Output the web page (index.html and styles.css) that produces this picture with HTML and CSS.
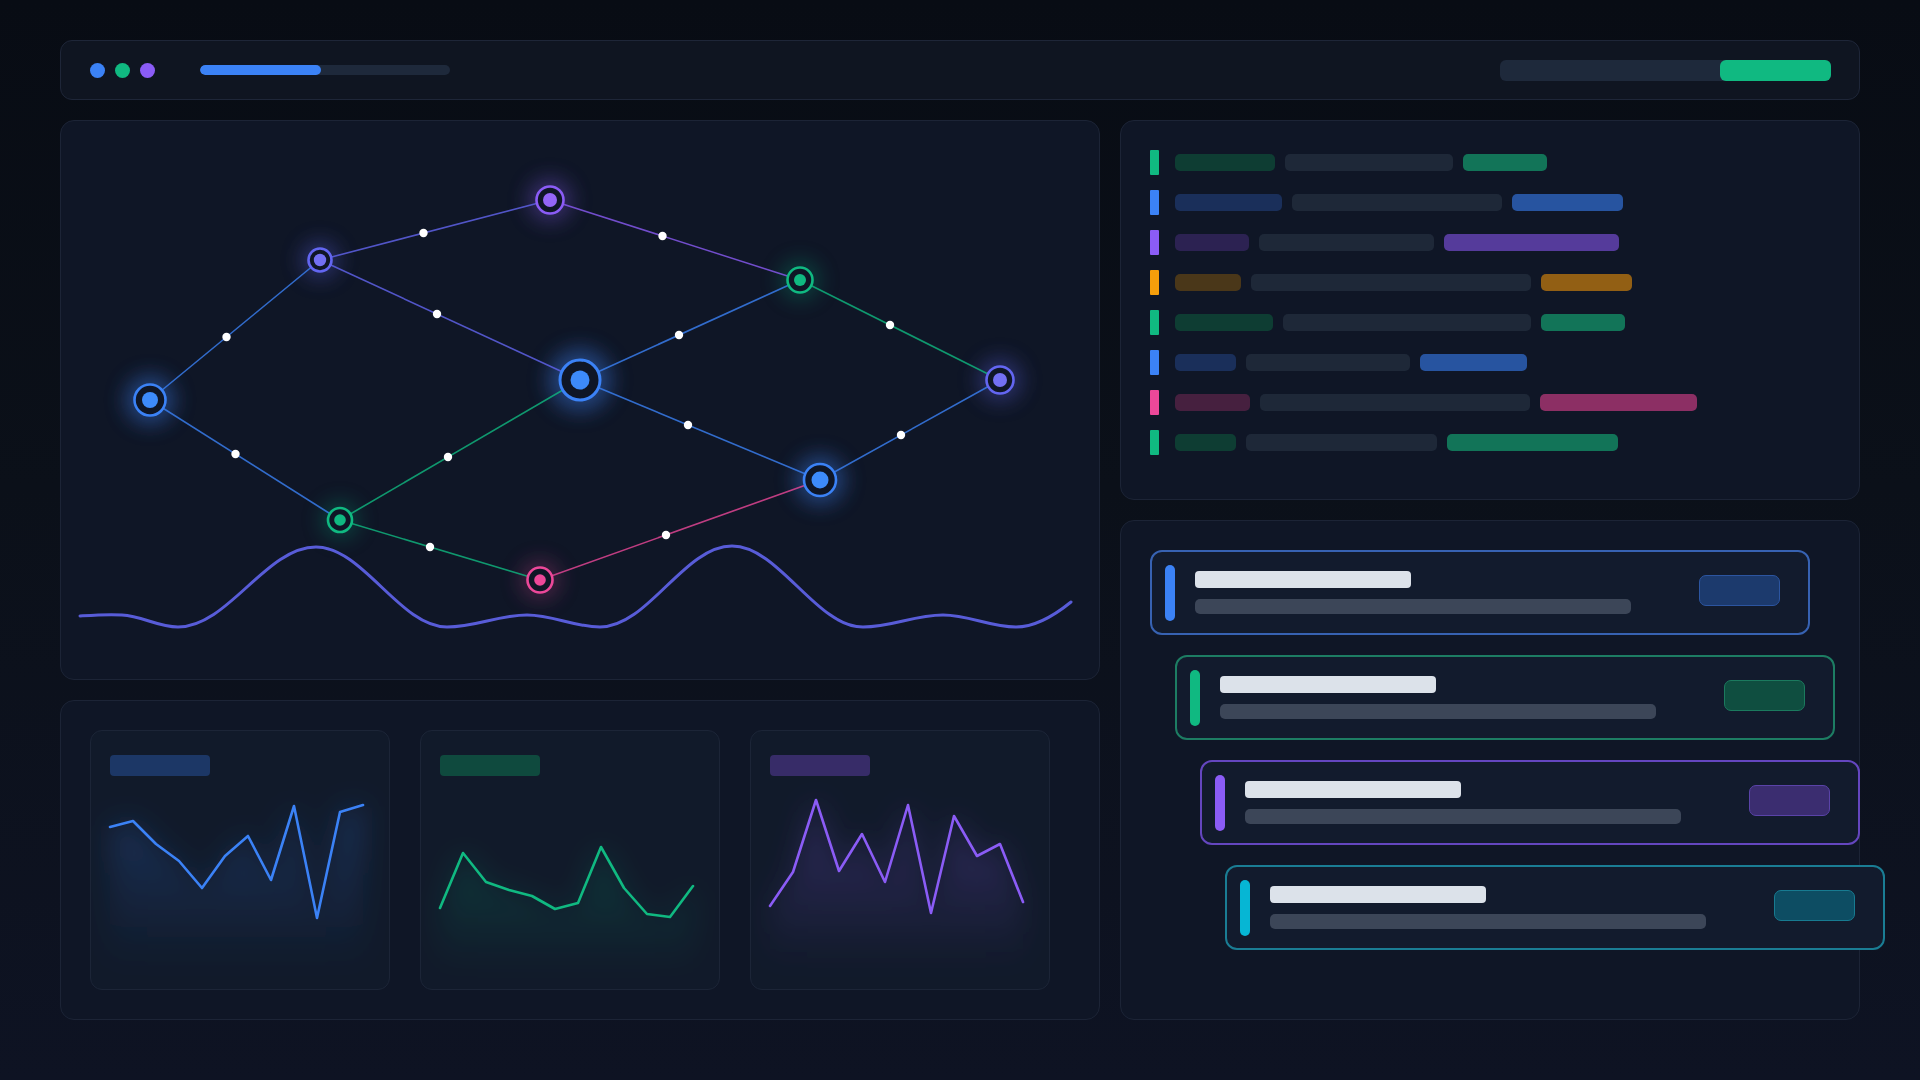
FILE: index.html
```html
<!DOCTYPE html>
<html lang="en">
<head>
<meta charset="utf-8">
<title>Dashboard</title>
<link rel="stylesheet" href="styles.css">
</head>
<body>
<div class="app">
  <header class="topbar">
    <div class="dots">
      <span class="dot dot-blue"></span>
      <span class="dot dot-green"></span>
      <span class="dot dot-purple"></span>
    </div>
    <div class="progress"><div class="progress-fill" style="width:121px"></div></div>
    <div class="status"><div class="status-fill"></div></div>
  </header>

  <main class="layout">
    <div class="col col-left">
      <section class="panel graph">
        <svg class="graph-svg" width="1038" height="558" viewBox="1 1 1038 558">
          <defs>
            <filter id="glow" x="-100%" y="-100%" width="300%" height="300%">
              <feGaussianBlur stdDeviation="10"/>
            </filter>
          </defs>
          <g class="glows" filter="url(#glow)">
            <circle cx="90" cy="280" r="25" fill="#3b82f6" opacity="0.4"/>
            <circle cx="260" cy="140" r="19" fill="#6366f1" opacity="0.32"/>
            <circle cx="490" cy="80" r="22" fill="#8b5cf6" opacity="0.32"/>
            <circle cx="520" cy="260" r="32" fill="#3b82f6" opacity="0.4"/>
            <circle cx="740" cy="160" r="20" fill="#10b981" opacity="0.25"/>
            <circle cx="940" cy="260" r="22" fill="#6366f1" opacity="0.32"/>
            <circle cx="280" cy="400" r="19" fill="#10b981" opacity="0.25"/>
            <circle cx="480" cy="460" r="20" fill="#ec4899" opacity="0.25"/>
            <circle cx="760" cy="360" r="25" fill="#3b82f6" opacity="0.4"/>
          </g>
          <g class="edges" stroke-width="1.6" fill="none" opacity="0.8">
            <line x1="90" y1="280" x2="260" y2="140" stroke="#3b82f6"/>
            <line x1="260" y1="140" x2="490" y2="80" stroke="#6366f1"/>
            <line x1="260" y1="140" x2="520" y2="260" stroke="#6366f1"/>
            <line x1="490" y1="80" x2="740" y2="160" stroke="#8b5cf6"/>
            <line x1="520" y1="260" x2="740" y2="160" stroke="#3b82f6"/>
            <line x1="740" y1="160" x2="940" y2="260" stroke="#10b981"/>
            <line x1="90" y1="280" x2="280" y2="400" stroke="#3b82f6"/>
            <line x1="280" y1="400" x2="520" y2="260" stroke="#10b981"/>
            <line x1="520" y1="260" x2="760" y2="360" stroke="#3b82f6"/>
            <line x1="760" y1="360" x2="940" y2="260" stroke="#3b82f6"/>
            <line x1="280" y1="400" x2="480" y2="460" stroke="#10b981"/>
            <line x1="480" y1="460" x2="760" y2="360" stroke="#ec4899"/>
          </g>
          <path class="wave" d="M20,496 C35,495 48,494 62,495 C82,496 98,507 118,507 C168,507 206,427 256,427 C303,427 340,507 387,507 C416,507 438,495 467,495 C493,495 514,507 540,507 C588,507 624,426 672,426 C719,426 756,507 803,507 C832,507 854,495 883,495 C909,495 930,507 956,507 C975,507 995,495 1011,482"/>
          <g class="nodes" stroke-width="2.6">
            <circle cx="90" cy="280" r="15.5" fill="#0f1626" stroke="#3b82f6"/>
            <circle cx="90" cy="280" r="8" fill="#3d8bfa"/>
            <circle cx="260" cy="140" r="11.5" fill="#0f1626" stroke="#6366f1"/>
            <circle cx="260" cy="140" r="6.2" fill="#7370f3"/>
            <circle cx="490" cy="80" r="13.5" fill="#0f1626" stroke="#8b5cf6"/>
            <circle cx="490" cy="80" r="7" fill="#9466f7"/>
            <circle cx="520" cy="260" r="20" fill="#0f1626" stroke="#3b82f6" stroke-width="3"/>
            <circle cx="520" cy="260" r="9.5" fill="#3d8bfa"/>
            <circle cx="740" cy="160" r="12.5" fill="#0f1626" stroke="#10b981"/>
            <circle cx="740" cy="160" r="6" fill="#10b981"/>
            <circle cx="940" cy="260" r="13.5" fill="#0f1626" stroke="#6366f1"/>
            <circle cx="940" cy="260" r="7" fill="#7370f3"/>
            <circle cx="280" cy="400" r="12" fill="#0f1626" stroke="#10b981"/>
            <circle cx="280" cy="400" r="5.8" fill="#10b981"/>
            <circle cx="480" cy="460" r="12.5" fill="#0f1626" stroke="#ec4899"/>
            <circle cx="480" cy="460" r="5.8" fill="#ec4899"/>
            <circle cx="760" cy="360" r="16" fill="#0f1626" stroke="#3b82f6"/>
            <circle cx="760" cy="360" r="8.5" fill="#3d8bfa"/>
          </g>
          <g class="packets" fill="#ffffff">
            <circle cx="166.5" cy="217" r="4.2"/>
            <circle cx="363.5" cy="113" r="4.2"/>
            <circle cx="377" cy="194" r="4.2"/>
            <circle cx="602.5" cy="116" r="4.2"/>
            <circle cx="619" cy="215" r="4.2"/>
            <circle cx="830" cy="205" r="4.2"/>
            <circle cx="175.5" cy="334" r="4.2"/>
            <circle cx="388" cy="337" r="4.2"/>
            <circle cx="628" cy="305" r="4.2"/>
            <circle cx="841" cy="315" r="4.2"/>
            <circle cx="370" cy="427" r="4.2"/>
            <circle cx="606" cy="415" r="4.2"/>
          </g>
        </svg>
      </section>

      <section class="panel charts">
        <div class="mini">
          <div class="mini-label label-blue"></div>
          <svg class="mini-svg" width="298" height="213" viewBox="1 46 298 213">
            <defs>
              <linearGradient id="fillBlue" x1="0" y1="0" x2="0" y2="1">
                <stop offset="0" stop-color="#3b82f6" stop-opacity="0.22"/>
                <stop offset="1" stop-color="#3b82f6" stop-opacity="0"/>
              </linearGradient>
              <filter id="soft" x="-30%" y="-30%" width="160%" height="160%">
                <feGaussianBlur stdDeviation="14"/>
              </filter>
            </defs>
            <polygon filter="url(#soft)" fill="url(#fillBlue)" points="20,97 43,91 66,114 89,131 112,158 135,126 158,106 181,150 204,76 227,188 250,82 273,75 273,235 20,235"/>
            <polyline class="spark spark-blue" points="20,97 43,91 66,114 89,131 112,158 135,126 158,106 181,150 204,76 227,188 250,82 273,75"/>
          </svg>
        </div>
        <div class="mini">
          <div class="mini-label label-green"></div>
          <svg class="mini-svg" width="298" height="213" viewBox="1 46 298 213">
            <defs>
              <linearGradient id="fillGreen" x1="0" y1="0" x2="0" y2="1">
                <stop offset="0" stop-color="#10b981" stop-opacity="0.2"/>
                <stop offset="1" stop-color="#10b981" stop-opacity="0"/>
              </linearGradient>
            </defs>
            <polygon filter="url(#soft)" fill="url(#fillGreen)" points="20,178 43,123 66,152 89,160 112,166 135,179 158,173 181,117 204,158 227,184 250,187 273,156 273,240 20,240"/>
            <polyline class="spark spark-green" points="20,178 43,123 66,152 89,160 112,166 135,179 158,173 181,117 204,158 227,184 250,187 273,156"/>
          </svg>
        </div>
        <div class="mini">
          <div class="mini-label label-purple"></div>
          <svg class="mini-svg" width="298" height="213" viewBox="1 46 298 213">
            <defs>
              <linearGradient id="fillPurple" x1="0" y1="0" x2="0" y2="1">
                <stop offset="0" stop-color="#8b5cf6" stop-opacity="0.26"/>
                <stop offset="1" stop-color="#8b5cf6" stop-opacity="0"/>
              </linearGradient>
            </defs>
            <polygon filter="url(#soft)" fill="url(#fillPurple)" points="20,176 43,142 66,70 89,141 112,104 135,152 158,75 181,183 204,86 227,126 250,114 273,172 273,235 20,235"/>
            <polyline class="spark spark-purple" points="20,176 43,142 66,70 89,141 112,104 135,152 158,75 181,183 204,86 227,126 250,114 273,172"/>
          </svg>
        </div>
      </section>
    </div>

    <div class="col col-right">
      <section class="panel log">
        <div class="log-row row-green">
          <span class="log-bar"></span>
          <span class="pill pill-soft" style="width:100px"></span>
          <span class="pill pill-gray" style="width:168px"></span>
          <span class="pill pill-strong" style="width:84px"></span>
        </div>
        <div class="log-row row-blue">
          <span class="log-bar"></span>
          <span class="pill pill-soft" style="width:107px"></span>
          <span class="pill pill-gray" style="width:210px"></span>
          <span class="pill pill-strong" style="width:111px"></span>
        </div>
        <div class="log-row row-purple">
          <span class="log-bar"></span>
          <span class="pill pill-soft" style="width:74px"></span>
          <span class="pill pill-gray" style="width:175px"></span>
          <span class="pill pill-strong" style="width:175px"></span>
        </div>
        <div class="log-row row-amber">
          <span class="log-bar"></span>
          <span class="pill pill-soft" style="width:66px"></span>
          <span class="pill pill-gray" style="width:280px"></span>
          <span class="pill pill-strong" style="width:91px"></span>
        </div>
        <div class="log-row row-green">
          <span class="log-bar"></span>
          <span class="pill pill-soft" style="width:98px"></span>
          <span class="pill pill-gray" style="width:248px"></span>
          <span class="pill pill-strong" style="width:84px"></span>
        </div>
        <div class="log-row row-blue">
          <span class="log-bar"></span>
          <span class="pill pill-soft" style="width:61px"></span>
          <span class="pill pill-gray" style="width:164px"></span>
          <span class="pill pill-strong" style="width:107px"></span>
        </div>
        <div class="log-row row-pink">
          <span class="log-bar"></span>
          <span class="pill pill-soft" style="width:75px"></span>
          <span class="pill pill-gray" style="width:270px"></span>
          <span class="pill pill-strong" style="width:157px"></span>
        </div>
        <div class="log-row row-green">
          <span class="log-bar"></span>
          <span class="pill pill-soft" style="width:61px"></span>
          <span class="pill pill-gray" style="width:191px"></span>
          <span class="pill pill-strong" style="width:171px"></span>
        </div>
      </section>

      <section class="panel tasks">
        <div class="task task-blue step-0">
          <span class="task-accent"></span>
          <div class="task-text"><span class="task-title"></span><span class="task-sub"></span></div>
          <span class="task-badge"></span>
        </div>
        <div class="task task-green step-1">
          <span class="task-accent"></span>
          <div class="task-text"><span class="task-title"></span><span class="task-sub"></span></div>
          <span class="task-badge"></span>
        </div>
        <div class="task task-purple step-2">
          <span class="task-accent"></span>
          <div class="task-text"><span class="task-title"></span><span class="task-sub"></span></div>
          <span class="task-badge"></span>
        </div>
        <div class="task task-cyan step-3">
          <span class="task-accent"></span>
          <div class="task-text"><span class="task-title"></span><span class="task-sub"></span></div>
          <span class="task-badge"></span>
        </div>
      </section>
    </div>
  </main>
</div>
</body>
</html>
```

FILE: styles.css
```css
* {
  box-sizing: border-box;
  margin: 0;
  padding: 0;
}

html, body {
  width: 1920px;
  height: 1080px;
}

body {
  background: linear-gradient(180deg, #080c14 0%, #0b1019 45%, #0e1323 100%);
  font-family: "Inter", "Liberation Sans", sans-serif;
  overflow: hidden;
}

.app {
  padding: 40px 60px;
}

/* ---------- top bar ---------- */
.topbar {
  height: 60px;
  background: #0f1521;
  border: 1px solid #1e2638;
  border-radius: 12px;
  display: flex;
  align-items: center;
  padding: 0 28px 0 29px;
}

.dots {
  display: flex;
  gap: 10px;
}

.dot {
  width: 15px;
  height: 15px;
  border-radius: 50%;
}

.dot-blue { background: #3b82f6; }
.dot-green { background: #10b981; }
.dot-purple { background: #8b5cf6; }

.progress {
  margin-left: 45px;
  width: 250px;
  height: 10px;
  border-radius: 5px;
  background: #1e293b;
  overflow: hidden;
}

.progress-fill {
  height: 100%;
  border-radius: 5px;
  background: #3b82f6;
}

.status {
  margin-left: auto;
  width: 331px;
  height: 21px;
  border-radius: 6px;
  background: #1e293b;
  display: flex;
  justify-content: flex-end;
}

.status-fill {
  width: 111px;
  border-radius: 6px;
  background: #10b981;
}

/* ---------- layout ---------- */
.layout {
  display: flex;
  gap: 20px;
  margin-top: 20px;
}

.col {
  display: flex;
  flex-direction: column;
  gap: 20px;
}

.col-left { width: 1040px; }
.col-right { width: 740px; }

.panel {
  background: #0f1626;
  border: 1px solid #1c2436;
  border-radius: 14px;
}

/* ---------- graph ---------- */
.graph {
  height: 560px;
  overflow: hidden;
}

.graph-svg {
  display: block;
}

.wave {
  fill: none;
  stroke: #6366f1;
  stroke-width: 3;
  stroke-linecap: round;
  opacity: 0.88;
}

/* ---------- mini charts ---------- */
.charts {
  height: 320px;
  display: flex;
  gap: 30px;
  padding: 29px;
}

.mini {
  width: 300px;
  height: 260px;
  background: #111a2a;
  border: 1px solid #1c2537;
  border-radius: 12px;
  overflow: hidden;
}

.mini-label {
  width: 100px;
  height: 21px;
  border-radius: 4px;
  margin: 24px 0 0 19px;
}

.label-blue { background: #1c3766; }
.label-green { background: #0f4a3e; }
.label-purple { background: #372c68; }

.mini-svg {
  display: block;
}

.spark {
  fill: none;
  stroke-width: 2.6;
  stroke-linejoin: round;
  stroke-linecap: round;
}

.spark-blue { stroke: #3b82f6; }
.spark-green { stroke: #10b981; }
.spark-purple { stroke: #8b5cf6; }

/* ---------- log list ---------- */
.log {
  height: 380px;
  padding: 29px;
  display: flex;
  flex-direction: column;
  gap: 15px;
}

.log-row {
  height: 25px;
  display: flex;
  align-items: center;
  gap: 10px;
}

.log-bar {
  width: 9px;
  height: 25px;
  border-radius: 1px;
  margin-right: 6px;
}

.pill {
  height: 17px;
  border-radius: 5px;
}

.pill-gray { background: #1e2838; }

.row-green .log-bar { background: #10b981; }
.row-green .pill-soft { background: #0e3d33; }
.row-green .pill-strong { background: #127458; }

.row-blue .log-bar { background: #3b82f6; }
.row-blue .pill-soft { background: #1a2f5a; }
.row-blue .pill-strong { background: #2754a0; }

.row-purple .log-bar { background: #8b5cf6; }
.row-purple .pill-soft { background: #2c2252; }
.row-purple .pill-strong { background: #553b9b; }

.row-amber .log-bar { background: #f59e0b; }
.row-amber .pill-soft { background: #4a3719; }
.row-amber .pill-strong { background: #925f14; }

.row-pink .log-bar { background: #ec4899; }
.row-pink .pill-soft { background: #46203f; }
.row-pink .pill-strong { background: #8c2f64; }

/* ---------- task cards ---------- */
.tasks {
  height: 500px;
  padding: 29px 0 0 29px;
  display: flex;
  flex-direction: column;
  gap: 20px;
}

.task {
  width: 660px;
  height: 85px;
  flex-shrink: 0;
  background: #121b2d;
  border: 2px solid;
  border-radius: 12px;
  display: flex;
  align-items: center;
  padding: 0 28px 0 13px;
}

.step-0 { margin-left: 0; }
.step-1 { margin-left: 25px; }
.step-2 { margin-left: 50px; }
.step-3 { margin-left: 75px; }

.task-accent {
  width: 10px;
  height: 56px;
  border-radius: 5px;
}

.task-text {
  margin-left: 20px;
  display: flex;
  flex-direction: column;
  gap: 11px;
}

.task-title {
  width: 216px;
  height: 17px;
  border-radius: 4px;
  background: #dce2ea;
}

.task-sub {
  width: 436px;
  height: 15px;
  border-radius: 5px;
  background: #3c4658;
}

.task-badge {
  margin-left: auto;
  margin-bottom: 4px;
  width: 81px;
  height: 31px;
  border-radius: 7px;
  border: 1px solid;
}

.task-blue { border-color: #3762b2; }
.task-blue .task-accent { background: #3b82f6; }
.task-blue .task-badge { background: #1c3a6d; border-color: #2c55a0; }

.task-green { border-color: #1d7d63; }
.task-green .task-accent { background: #10b981; }
.task-green .task-badge { background: #0f4e40; border-color: #1b7a5e; }

.task-purple { border-color: #6446bf; }
.task-purple .task-accent { background: #8b5cf6; }
.task-purple .task-badge { background: #3b2d70; border-color: #5a43a8; }

.task-cyan { border-color: #1a7d94; }
.task-cyan .task-accent { background: #06b6d4; }
.task-cyan .task-badge { background: #0d4d63; border-color: #177b91; }
```
